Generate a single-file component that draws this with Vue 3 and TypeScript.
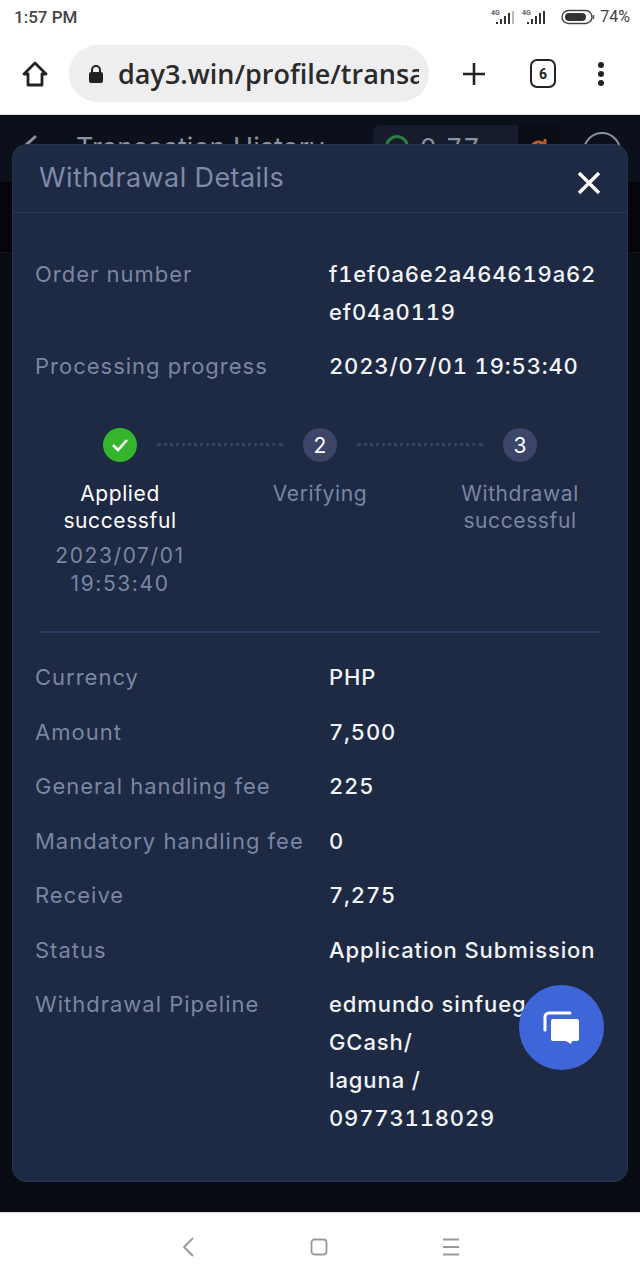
<script setup lang="ts">
const infoTop = [
  { label: 'Order number', lines: ['f1ef0a6e2a464619a62', 'ef04a0119'] },
  { label: 'Processing progress', lines: ['2023/07/01 19:53:40'] },
]
const infoBottom = [
  { label: 'Currency', lines: ['PHP'] },
  { label: 'Amount', lines: ['7,500'] },
  { label: 'General handling fee', lines: ['225'] },
  { label: 'Mandatory handling fee', lines: ['0'] },
  { label: 'Receive', lines: ['7,275'] },
  { label: 'Status', lines: ['Application Submission'] },
  { label: 'Withdrawal Pipeline', lines: ['edmundo sinfuego', 'GCash/', 'laguna /', '09773118029'] },
]

// lines with digits use tabular figures
function isNum(line: string) {
  return /\d/.test(line)
}
</script>

<template>
  <div class="phone">
    <div class="status">
      <span class="time">1:57 PM</span>
      <div class="status-right">
        <svg width="26" height="18" viewBox="0 0 26 18">
          <text x="1" y="7" class="net">4G</text>
          <path d="M6 14h2v2H6zM10 11h2v5h-2zM14 8h2v8h-2zM18 5h2v11h-2z" fill="#333" />
          <path d="M22 3h2v13h-2z" fill="#bbb" />
        </svg>
        <svg width="26" height="18" viewBox="0 0 26 18">
          <text x="1" y="7" class="net">4G</text>
          <path d="M6 14h2v2H6zM10 11h2v5h-2zM14 8h2v8h-2zM18 5h2v11h-2zM22 3h2v13h-2z" fill="#333" />
        </svg>
        <svg class="battery" width="34" height="16" viewBox="0 0 34 16">
          <rect x="1" y="1.5" width="30" height="13" rx="6.5" fill="none" stroke="#444" stroke-width="1.4" />
          <rect x="4" y="4" width="21" height="8" rx="4" fill="#333" />
          <path d="M32.5 6v4" stroke="#444" stroke-width="1.4" />
        </svg>
        <span class="batt">74%</span>
      </div>
    </div>

    <div class="browser">
      <svg class="home" width="28" height="28" viewBox="0 0 28 28" fill="none" stroke="#222" stroke-width="2.8" stroke-linejoin="round">
        <path d="M14 3 3 14h4v11h14V14h4z" />
      </svg>
      <div class="url">
        <svg width="16" height="20" viewBox="0 0 16 20">
          <path d="M4 9V6a4 4 0 0 1 8 0v3" fill="none" stroke="#222" stroke-width="2" />
          <rect x="1" y="8" width="14" height="11" rx="2" fill="#222" />
        </svg>
        <span class="url-text">day3.win/profile/transactions</span>
      </div>
      <svg class="plus" width="24" height="24" viewBox="0 0 24 24" stroke="#222" stroke-width="2.6">
        <path d="M12 1v22M1 12h22" />
      </svg>
      <div class="tabs">6</div>
      <svg class="more" width="8" height="24" viewBox="0 0 8 24" fill="#222">
        <circle cx="4" cy="3" r="3" /><circle cx="4" cy="12" r="3" /><circle cx="4" cy="21" r="3" />
      </svg>
    </div>

    <div class="page">
      <div class="page-head">
        <svg class="back" width="20" height="24" viewBox="0 0 20 24" fill="none" stroke="#8b93a5" stroke-width="3">
          <path d="M12 3 2 12l10 9" />
        </svg>
        <span class="page-title">Transaction History</span>
        <div class="balance">
          <span class="coin"></span>
          <span class="amt">0.77</span>
          <svg class="caret" width="12" height="8" viewBox="0 0 12 8" fill="none" stroke="#6d7586" stroke-width="2">
            <path d="M1 7l5-5 5 5" />
          </svg>
        </div>
        <div class="refresh">
          <svg width="22" height="22" viewBox="0 0 22 22" fill="none" stroke="#b5602c" stroke-width="3">
            <path d="M3 16a8 8 0 0 1 14-7M17 3v6h-6" />
          </svg>
        </div>
        <div class="avatar"></div>
      </div>
      <div class="page-tabs"></div>

      <div class="modal">
        <div class="modal-head">
          <span class="modal-title">Withdrawal Details</span>
          <svg width="24" height="24" viewBox="0 0 24 24" stroke="#fff" stroke-width="3.4">
            <path d="M2 2l20 20M22 2 2 22" />
          </svg>
        </div>

        <div class="modal-body">
          <div v-for="r in infoTop" :key="r.label" class="row">
            <span class="label">{{ r.label }}</span>
            <div class="value">
              <div v-for="l in r.lines" :key="l" :class="{ num: isNum(l) }">{{ l }}</div>
            </div>
          </div>

          <div class="steps">
            <div class="step done">
              <div class="dot-wrap">
                <span class="dot green">
                  <svg width="20" height="16" viewBox="0 0 20 16" fill="none" stroke="#fff" stroke-width="2.6">
                    <path d="M3 8l5 5 9-10" />
                  </svg>
                </span>
                <span class="dash"></span>
              </div>
              <div class="step-name">Applied<br />successful</div>
              <div class="step-time">2023/07/01<br />19:53:40</div>
            </div>
            <div class="step">
              <div class="dot-wrap">
                <span class="dot">2</span>
                <span class="dash"></span>
              </div>
              <div class="step-name">Verifying</div>
            </div>
            <div class="step">
              <div class="dot-wrap">
                <span class="dot">3</span>
              </div>
              <div class="step-name">Withdrawal<br />successful</div>
            </div>
          </div>

          <div class="divider"></div>

          <div class="rows-bottom">
            <div v-for="r in infoBottom" :key="r.label" class="row">
              <span class="label">{{ r.label }}</span>
              <div class="value">
                <div v-for="l in r.lines" :key="l" :class="{ num: isNum(l) }">{{ l }}</div>
              </div>
            </div>
          </div>
        </div>
      </div>

      <button class="fab">
        <svg width="40" height="36" viewBox="0 0 40 36">
          <path d="M3 20V7a4 4 0 0 1 4-4h21" fill="none" stroke="#fff" stroke-width="3" stroke-linecap="round" />
          <path d="M11 9h24a2 2 0 0 1 2 2v18a2 2 0 0 1-2 2h-5l-1 3-5-3H11a2 2 0 0 1-2-2V11a2 2 0 0 1 2-2z" fill="#fff" />
        </svg>
      </button>
    </div>

    <div class="nav">
      <svg width="16" height="22" viewBox="0 0 16 22" fill="none" stroke="#999" stroke-width="1.8">
        <path d="M13 2 4 11l9 9" />
      </svg>
      <svg width="18" height="18" viewBox="0 0 18 18" fill="none" stroke="#999" stroke-width="1.8">
        <rect x="1.500" y="1.500" width="15" height="15" rx="3" />
      </svg>
      <svg width="18" height="18" viewBox="0 0 18 18" stroke="#999" stroke-width="1.8">
        <path d="M1 1.500h16M1 9h16M1 16.500h16" />
      </svg>
    </div>
  </div>
</template>

<style>
html,
body {
  margin: 0;
  background: #fff;
}
</style>

<style scoped>
.phone {
  width: 640px;
  height: 1280px;
  display: flex;
  flex-direction: column;
  overflow: hidden;
  font-family: Inter, "Liberation Sans", sans-serif;
}

.status {
  height: 33px;
  flex: none;
  padding: 0 10px 0 14px;
  display: flex;
  align-items: center;
  justify-content: space-between;
  background: #fff;
  color: #444;
}
.time {
  font-family: Roboto, sans-serif;
  font-size: 17px;
  font-weight: 500;
}
.status-right {
  display: flex;
  align-items: center;
  gap: 5px;
}
.battery {
  margin-left: 9px;
}
.net {
  font: 700 7px Roboto, sans-serif;
  fill: #666;
}
.batt {
  font-family: Roboto, sans-serif;
  font-size: 16px;
}

.browser {
  height: 82px;
  flex: none;
  display: flex;
  align-items: center;
  background: #fff;
  border-bottom: 1px solid #ddd;
  box-sizing: border-box;
  padding-left: 21px;
}
.home {
  flex: none;
}
.url {
  width: 360px;
  height: 57px;
  margin-left: 20px;
  padding: 0 10px 0 19px;
  box-sizing: border-box;
  flex: none;
  display: flex;
  align-items: center;
  gap: 14px;
  border-radius: 29px;
  background: #eeeef0;
  overflow: hidden;
}
.url svg {
  flex: none;
}
.url-text {
  font-family: "Open Sans", sans-serif;
  font-size: 27px;
  font-weight: 600;
  color: #2a2a2a;
  white-space: nowrap;
  overflow: hidden;
}
.plus {
  flex: none;
  margin-left: 33px;
}
.tabs {
  width: 26px;
  height: 29px;
  margin-left: 44px;
  flex: none;
  box-sizing: border-box;
  border: 2.500px solid #222;
  border-radius: 7px;
  display: flex;
  align-items: center;
  justify-content: center;
  font: 700 14px Roboto, sans-serif;
  color: #222;
}
.more {
  flex: none;
  margin-left: 41px;
}

.page {
  position: relative;
  flex: 1;
  background: #080b12;
}
.page-head {
  height: 67px;
  box-sizing: border-box;
  padding: 10px 0 0 24px;
  display: flex;
  align-items: flex-start;
  background: #0c101a;
}
.back {
  flex: none;
  margin-top: 8px;
}
.page-title {
  width: 250px;
  flex: none;
  margin-left: 32px;
  margin-top: 6px;
  font-size: 27px;
  white-space: nowrap;
  color: #8b93a5;
}
.balance {
  width: 145px;
  height: 44px;
  margin-left: 47px;
  flex: none;
  display: flex;
  align-items: center;
  padding-left: 12px;
  box-sizing: border-box;
  background: #161c2c;
  border-radius: 8px 0 0 8px;
  color: #8b93a5;
  font-size: 26px;
  letter-spacing: 2px;
}
.coin {
  width: 24px;
  height: 24px;
  margin-right: 11px;
  box-sizing: border-box;
  border: 3px solid #2a7d45;
  border-radius: 50%;
}
.caret {
  margin-left: 25px;
  margin-top: 14px;
}
.refresh {
  width: 42px;
  height: 44px;
  flex: none;
  display: flex;
  align-items: center;
  justify-content: center;
  background: #0a0d15;
}
.avatar {
  width: 38px;
  height: 38px;
  margin: 7px 0 0 23px;
  flex: none;
  box-sizing: border-box;
  border: 2px solid #8b93a5;
  border-radius: 50%;
}
.page-tabs {
  height: 70px;
  background: #04060b;
  border-bottom: 1px solid #111622;
}

.modal {
  position: absolute;
  left: 12px;
  top: 29px;
  width: 616px;
  height: 1038px;
  box-sizing: border-box;
  background: #1e2943;
  border-radius: 14px;
  border: 1px solid #26324f;
}
.modal-head {
  height: 68px;
  box-sizing: border-box;
  padding: 0 26px 2px 26px;
  display: flex;
  align-items: center;
  justify-content: space-between;
  border-bottom: 1px solid #2a3654;
}
.modal-title {
  font-size: 27px;
  letter-spacing: 0.400px;
  color: #7e8aa8;
}
.modal-head svg {
  margin-top: 10px;
}
.modal-body {
  padding: 42px 22px 0;
}

.row {
  display: grid;
  grid-template-columns: 294px 1fr;
  margin-bottom: 16px;
  font-size: 22px;
  line-height: 38px;
  letter-spacing: 1px;
}
.label {
  color: #7a86a2;
  white-space: nowrap;
}
.value {
  color: #f2f4f8;
  font-weight: 500;
  letter-spacing: 0.900px;
  white-space: nowrap;
}
.num {
  letter-spacing: 0.850px;
  font-variant-numeric: tabular-nums;
}

.steps {
  display: grid;
  grid-template-columns: repeat(3, 200px);
  margin: 43px 0 0 -15px;
}
.step {
  display: flex;
  flex-direction: column;
  align-items: center;
  text-align: center;
}
.dot-wrap {
  position: relative;
  width: 100%;
  height: 34px;
  display: flex;
  justify-content: center;
}
.dot {
  width: 34px;
  height: 34px;
  border-radius: 50%;
  background: #3d4668;
  color: #fff;
  display: flex;
  align-items: center;
  justify-content: center;
  font-size: 21px;
}
.dot.green {
  background: #35b52c;
}
.dash {
  position: absolute;
  left: 137px;
  top: 15px;
  width: 126px;
  height: 3px;
  border-top: 3px dotted #36415f;
  box-sizing: border-box;
}
.step-name {
  margin-top: 18px;
  font-size: 21px;
  line-height: 27px;
  letter-spacing: 0.600px;
  color: #7a86a2;
}
.done .step-name {
  color: #fff;
}
.step-time {
  margin-top: 8px;
  font-size: 21px;
  line-height: 28px;
  letter-spacing: 1.600px;
  color: #7a86a2;
}

.divider {
  height: 2px;
  margin: 33px 5px 0;
  background: #2d3a66;
}
.rows-bottom {
  margin-top: 25px;
}
.rows-bottom .row {
  margin-bottom: 16.500px;
}

.fab {
  position: absolute;
  left: 519px;
  top: 870px;
  width: 85px;
  height: 85px;
  padding: 0;
  border: none;
  border-radius: 50%;
  background: #3f66d8;
  display: flex;
  align-items: center;
  justify-content: center;
}

.nav {
  height: 68px;
  flex: none;
  box-sizing: border-box;
  border-top: 1px solid #ddd;
  background: #fff;
  display: flex;
  align-items: center;
  justify-content: center;
  gap: 114px;
}
</style>
